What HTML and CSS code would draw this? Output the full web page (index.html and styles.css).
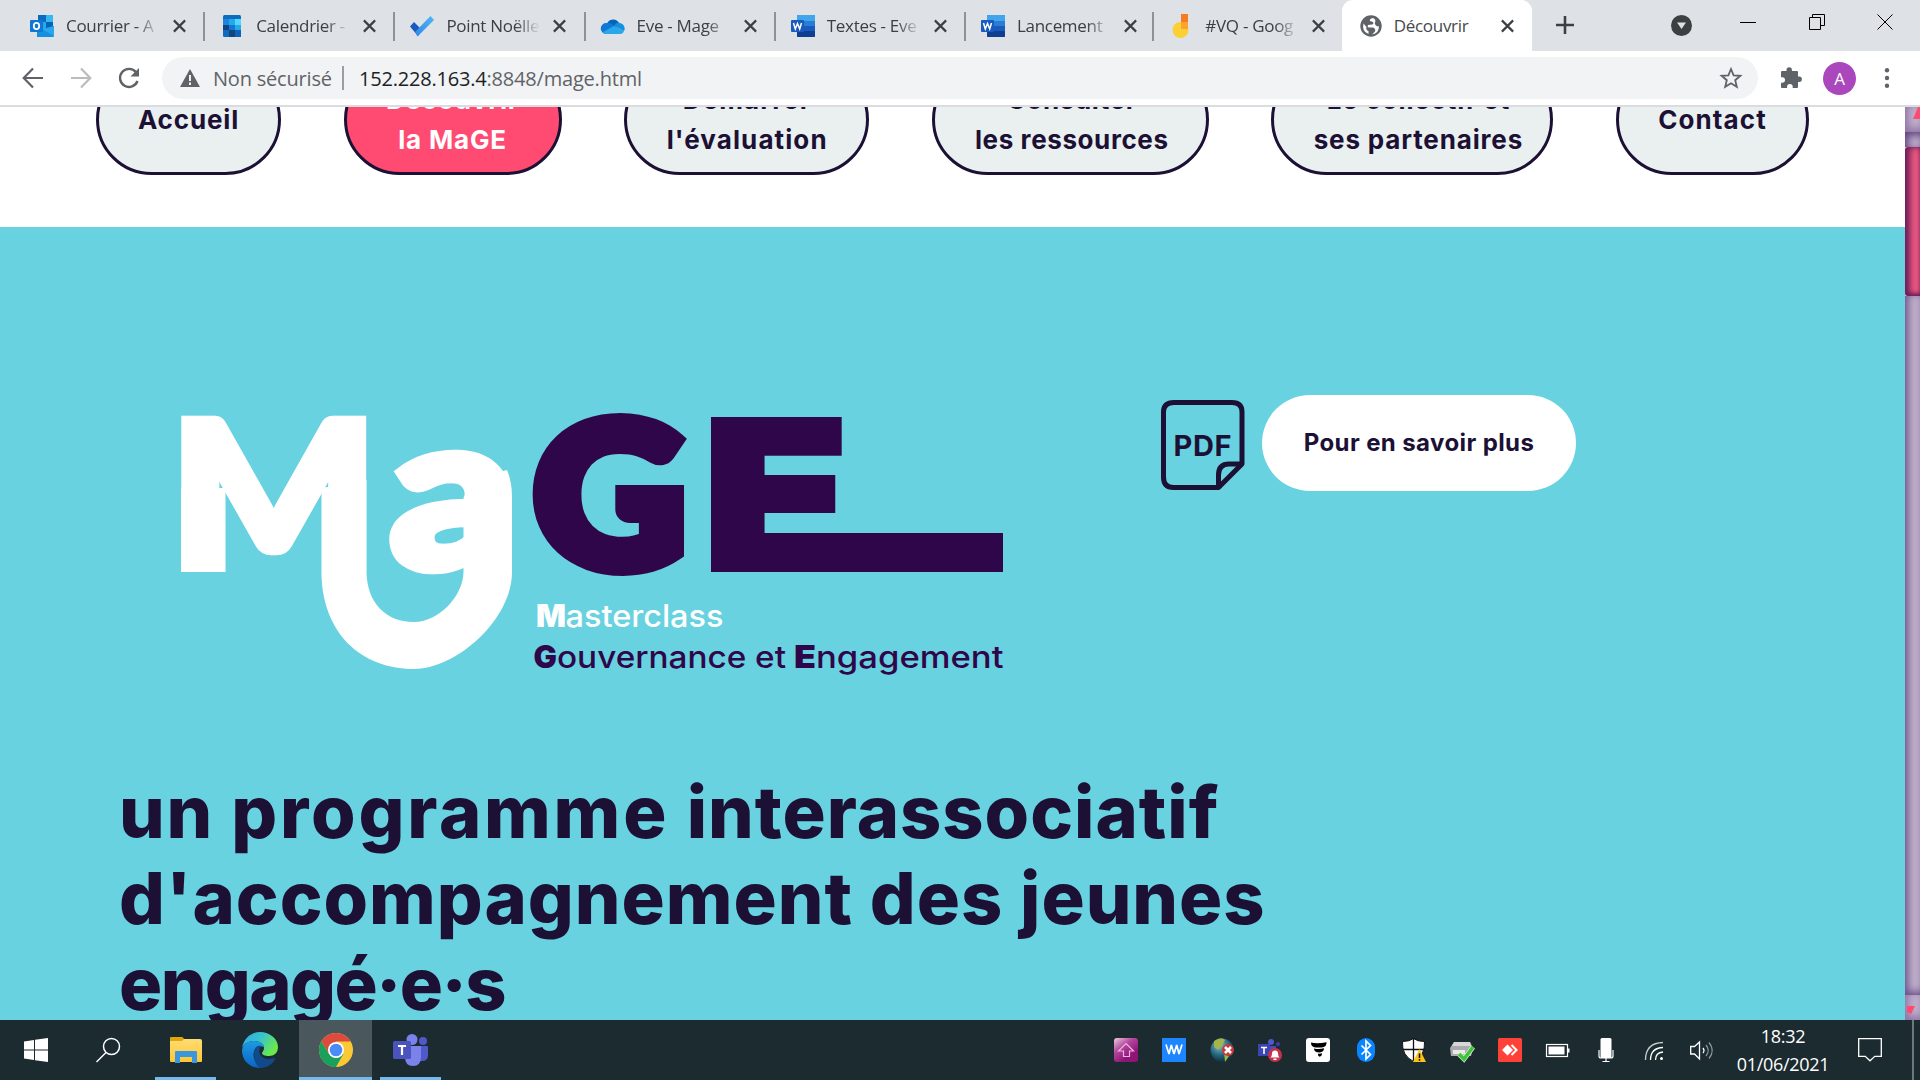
FILE: index.html
```html
<!DOCTYPE html>
<html lang="fr">
<head>
<meta charset="utf-8">
<title>Découvrir</title>
<link rel="stylesheet" href="styles.css">
</head>
<body>
<svg class="defs" aria-hidden="true">
  <defs>
    <linearGradient id="check" x1="1" y1="0" x2="0" y2="1"><stop offset="0" stop-color="#4db8f8"/><stop offset="1" stop-color="#2f86e8"/></linearGradient>
    <linearGradient id="edgeTop" x1="0" y1="0" x2="1" y2=".5"><stop offset="0" stop-color="#2fa9e6"/><stop offset=".5" stop-color="#37c2cf"/><stop offset="1" stop-color="#6be84c"/></linearGradient>
    <linearGradient id="edgeLow" x1="0" y1="0" x2="0" y2="1"><stop offset="0" stop-color="#1e9be3"/><stop offset="1" stop-color="#0a63c4"/></linearGradient>
    <linearGradient id="folder" x1="0" y1="0" x2="0" y2="1"><stop offset="0" stop-color="#ffdc73"/><stop offset="1" stop-color="#fcc735"/></linearGradient>
    <linearGradient id="plum" x1="0" y1="0" x2=".6" y2=".8"><stop offset="0" stop-color="#e9cfe3"/><stop offset=".5" stop-color="#b5479d"/><stop offset="1" stop-color="#8f1478"/></linearGradient>
    <radialGradient id="globe" cx=".4" cy=".3" r=".7"><stop offset="0" stop-color="#7fc0cf"/><stop offset=".6" stop-color="#25677f"/><stop offset="1" stop-color="#123542"/></radialGradient>
    <symbol id="x" viewBox="0 0 16 16"><path d="M2 2l12 12M14 2L2 14" fill="none" stroke="#3c4043" stroke-width="2.3"/></symbol>
    <symbol id="word" viewBox="0 0 24 22">
      <rect x="6" width="18" height="22" rx="1" fill="#185abd"/><path d="M6 1q0-1 1-1h16q1 0 1 1v5H6z" fill="#41a5ee"/><path d="M6 6h18v5H6z" fill="#2b7cd3"/><path d="M6 16h18v5q0 1-1 1H7q-1 0-1-1z" fill="#103f91"/>
      <rect y="5" width="13" height="12" rx="1" fill="#185abd"/><path d="M2.500 8l1.800 6 2.200-5.500L8.700 14l1.800-6" fill="none" stroke="#fff" stroke-width="1.500"/>
    </symbol>
  </defs>
</svg>

<div class="screen">
  <header class="tabs">
    <div class="tab">
      <svg class="fav" viewBox="0 0 24 22"><rect x="8" width="15" height="15" fill="#28a8ea"/><path d="M8 0h8v7H8z" fill="#0a6cbd"/><path d="M16 7h7v7h-7z" fill="#0364b8"/><path d="M16 0h7v7h-7z" fill="#35b8f1"/><path d="M7 11l9 5 8-5v10q0 1-1 1H7z" fill="#1490df"/><path d="M24 11v10L12 14z" fill="#28a8ea"/><rect y="5" width="13" height="12" rx="1" fill="#0f78d4"/><ellipse cx="6.5" cy="11" rx="2.7" ry="3.1" fill="none" stroke="#fff" stroke-width="1.8"/></svg>
      <span class="title">Courrier - A</span><svg class="close"><use href="#x"/></svg>
    </div>
    <div class="tab">
      <svg class="fav" viewBox="0 0 24 22"><rect x="3" width="18" height="22" rx="1.5" fill="#0f6cbd"/><path d="M3 4h6v6H3z" fill="#1a86dd"/><path d="M9 4h6v6H9z" fill="#28a8ea"/><path d="M15 4h6v6h-6z" fill="#50d9ff"/><path d="M9 10h6v5H9z" fill="#0f78d4"/><path d="M15 10h6v5h-6z" fill="#28a8ea"/><path d="M3 10h6v5H3zM9 15h6v7H9z" fill="#14447d"/><path d="M15 15h6v7h-6z" fill="#0f62ba"/></svg>
      <span class="title">Calendrier -</span><svg class="close"><use href="#x"/></svg>
    </div>
    <div class="tab">
      <svg class="fav" viewBox="0 0 24 22"><path d="M0 11.500L4 7l8 8-4 6z" fill="#195abd"/><path d="M7.500 21.500L24 5 20.500 1 5 17z" fill="url(#check)"/></svg>
      <span class="title">Point Noëlle</span><svg class="close"><use href="#x"/></svg>
    </div>
    <div class="tab">
      <svg class="fav" viewBox="0 0 24 22"><path d="M6 9a6.500 6.500 0 0 1 12-1l-4 6z" fill="#0364b8"/><path d="M5 19A5.500 5.500 0 0 1 5.500 8Q8 7 11 9l7 5z" fill="#0f78d4"/><path d="M13 11q2-4 6-3a5.500 5.500 0 0 1 4 8z" fill="#1490df"/><path d="M2 17l11-6 10 5q-1 3-4 3H5q-2 0-3-2z" fill="#28a8ea"/></svg>
      <span class="title">Eve - Mage</span><svg class="close"><use href="#x"/></svg>
    </div>
    <div class="tab">
      <svg class="fav"><use href="#word"/></svg>
      <span class="title">Textes - Eve</span><svg class="close"><use href="#x"/></svg>
    </div>
    <div class="tab">
      <svg class="fav"><use href="#word"/></svg>
      <span class="title">Lancement</span><svg class="close"><use href="#x"/></svg>
    </div>
    <div class="tab">
      <svg class="fav" viewBox="0 0 24 22"><path d="M12-1h7v8h-7z" fill="#f57c20"/><circle cx="11.500" cy="15" r="8" fill="#fbd034"/><path d="M12 7h7v7h-7z" fill="#fba22f"/></svg>
      <span class="title">#VQ - Goog</span><svg class="close"><use href="#x"/></svg>
    </div>
    <div class="tab active">
      <svg class="fav" viewBox="0 0 24 22"><circle cx="13" cy="11" r="10.700" fill="#5f6368"/><path d="M15 3q-4 1-3 3l3 1q1 2-1 2.500l-4 .5q-1 2 1 2.500h4q3 1 2 4l-3 3q7-1 7-8.500-1 1-3-.5-2-2-.500-4.500 0-2-2.500-3z" fill="#fff"/><path d="M5.500 8.500q-2 8 5 10.500v-3q-3-1-2-4z" fill="#fff"/></svg>
      <span class="title">Découvrir</span><svg class="close"><use href="#x"/></svg>
    </div>
    <svg class="newtab" viewBox="0 0 18 18"><path d="M9 0v18M0 9h18" stroke="#3c4043" stroke-width="2.600"/></svg>
    <div class="window">
      <svg width="21" height="21" viewBox="0 0 21 21"><circle cx="10.500" cy="10.500" r="10.500" fill="#3c4043"/><path d="M6 7.500h9L10.500 14z" fill="#dee1e6"/></svg>
      <svg width="16" height="16" viewBox="0 0 16 16"><path d="M0 8.500h16" stroke="#000"/></svg>
      <svg width="16" height="16" viewBox="0 0 16 16" fill="none" stroke="#000"><path d="M.5 3.500h11v12H.5zM3.500 3V.5h12v11H12"/></svg>
      <svg width="16" height="16" viewBox="0 0 16 16"><path d="M.5.5l15 15m0-15l-15 15" stroke="#000"/></svg>
    </div>
  </header>

  <div class="toolbar">
    <svg class="nav-icon" viewBox="0 0 24 24" fill="none" stroke="#5f6368" stroke-width="2.200"><path d="M22 12H3M12 2.500L2.700 12l9.300 9.500"/></svg>
    <svg class="nav-icon" viewBox="0 0 24 24" fill="none" stroke="#babcbe" stroke-width="2.200"><path d="M2 12h19M12 2.500l9.300 9.500-9.300 9.500"/></svg>
    <svg class="nav-icon" viewBox="0 0 24 24" fill="none" stroke="#5f6368" stroke-width="2.400"><path d="M20.500 15A9 9 0 1 1 19 6.200"/><path d="M22 2v8.500h-8.500z" fill="#5f6368" stroke="none"/></svg>
    <div class="omnibox">
      <svg width="20" height="18" viewBox="0 0 20 18"><path d="M10 0l10 18H0z" fill="#5f6368"/><path d="M10 6v6m0 1.500V16" stroke="#f1f3f4" stroke-width="2"/></svg>
      <span class="secure">Non sécurisé</span>
      <span class="url"><b>152.228.163.4</b>:8848/mage.html</span>
      <svg class="star" width="22" height="22" viewBox="0 0 22 22"><path d="M11 2l2.600 6.300 6.800.5-5.200 4.400 1.600 6.600L11 16.200l-5.800 3.600 1.600-6.600L1.600 8.800l6.800-.5z" fill="none" stroke="#5f6368" stroke-width="1.800"/></svg>
    </div>
    <svg class="puzzle" width="22" height="22" viewBox="0 0 22 22"><path d="M1 5q0-1 1-1h4.500V3a2.700 2.700 0 0 1 5.400 0v1H17q1 0 1 1v4.500h1.200a2.700 2.700 0 0 1 0 5.400H18V20q0 1-1 1h-4.300v-1.300a2.800 2.800 0 0 0-5.600 0V21H2q-1 0-1-1v-4.200h1.200a2.800 2.800 0 0 0 0-5.600H1z" fill="#5f6368"/></svg>
    <span class="avatar">A</span>
    <svg class="dots" width="6" height="20" viewBox="0 0 6 20" fill="#5f6368"><circle cx="3" cy="2.200" r="2.200"/><circle cx="3" cy="10" r="2.200"/><circle cx="3" cy="17.800" r="2.200"/></svg>
  </div>

  <div class="viewport">
    <main class="page">
      <nav class="menu">
        <a class="pill home">Accueil</a>
        <a class="pill discover current">Découvrir<br>la MaGE</a>
        <a class="pill start">Démarrer<br>l'évaluation</a>
        <a class="pill resources">Consulter<br>les ressources</a>
        <a class="pill partners">Le collectif et<br>ses partenaires</a>
        <a class="pill contact">Contact</a>
      </nav>
      <section class="hero">
        <div class="intro">
          <svg class="logo" viewBox="180 412 824 262">
            <g class="mark" fill="#fff" stroke="#fff">
              <text stroke-width="8" transform="translate(169 568) scale(1.1 1.02)">M</text>
              <path stroke="none" d="M181 488h44.500v84H181z"/>
              <text stroke-width="10" transform="translate(390.200 566.500) scale(1.242 1.068)">a</text>
              <path stroke="none" d="M321.500 488V575C323 632 360 669 414 669 456 669 512 620 512 572V497Q512 482 507 470L470 480 463.500 498V572C463 597 438 622 414 622 385 622 367 602 366.500 572V480z"/>
            </g>
            <g class="mark" fill="#2f064a" stroke="#2f064a">
              <text stroke-width="16" transform="translate(534.100 566.100) scale(1.045 .988)">G</text>
              <text class="wide" stroke-width="6" transform="translate(703.400 568.900) scale(1.179 1.026)">E</text>
              <path stroke="none" d="M720 533h283v39H720z"/>
            </g>
            <g class="tagline" fill="#fff"><text x="536" y="626.500" class="cap" textLength="30" lengthAdjust="spacingAndGlyphs">M</text><text x="565.500" y="626.500" textLength="158" lengthAdjust="spacingAndGlyphs">asterclass</text></g>
            <g class="tagline" fill="#2f064a"><text x="533.500" y="667.500" class="cap">G</text><text x="557" y="667.500" textLength="229" lengthAdjust="spacingAndGlyphs">ouvernance et</text><text x="794" y="667.500" class="cap" textLength="22" lengthAdjust="spacingAndGlyphs">E</text><text x="816" y="667.500" textLength="187.500" lengthAdjust="spacingAndGlyphs">ngagement</text></g>
          </svg>
          <div class="more">
            <svg class="pdf" viewBox="0 0 84 90"><g fill="none" stroke="#1c1135" stroke-width="5" stroke-linejoin="round"><path d="M81 64V12Q81 2.500 71 2.500H13Q2.500 2.500 2.500 12V77q0 10.500 10 10.500H57.500L81 64H68Q57.500 64 57.500 75V87.500"/></g><text x="12.500" y="56" textLength="58">PDF</text></svg>
            <a class="button">Pour en savoir plus</a>
          </div>
        </div>
        <h1><span class="l1">un <span class="w1">programme</span> <span class="w2">interassociatif</span></span><span class="l2">d'accompagnement des jeunes</span><span class="l3">engagé·e·s</span></h1>
      </section>
    </main>
    <aside class="scrollbar">
      <div class="arrow"><svg class="up" viewBox="0 0 8 12"><path d="M8 0v12H0L5 0z" fill="#ff4b72"/></svg></div>
      <div class="before"></div>
      <div class="thumb"></div>
      <div class="track"></div>
      <div class="arrow"><svg class="down" viewBox="0 0 8 9"><path d="M0 0h8L4 8 0 6z" fill="#ff4b72"/></svg></div>
    </aside>
  </div>

  <footer class="taskbar">
    <div class="apps">
      <div class="app"><svg width="24" height="24" viewBox="0 0 24 24"><path d="M0 3.400l10-1.500v9.500H0zM11 1.700L24 0v11.400H11zM0 12.500h10V22L0 20.600zM11 12.500h13V24l-13-1.800z" fill="#fff"/></svg></div>
      <div class="app"><svg width="24" height="24" viewBox="0 0 24 24" fill="none" stroke="#fff" stroke-width="1.500"><circle cx="15.500" cy="8.500" r="8"/><path d="M10 14.500L.5 24"/></svg></div>
      <div class="app open explorer"><svg width="32" height="28" viewBox="0 0 32 28"><path d="M0 2q0-1 1-1h11q1 0 2 2v4H0z" fill="#e5a50a"/><path d="M0 5h12l2-2h16q2 0 2 2v20q0 1-1 1H1q-1 0-1-1z" fill="url(#folder)"/><path d="M5 16q0-1 1-1h20q1 0 1 1v11h-5v-6H10v6H5z" fill="#3a96dd"/></svg></div>
      <div class="app edge"><svg width="36" height="36" viewBox="0 0 36 36"><path d="M0 16C2 6 9 0 18 0c10 0 18 7 18 15 0 6-4 9-9 9-4 0-7-1-7-3 0-1 2-2 2-5 0-4-4-7-10-7C6 9 2 12 0 16z" fill="url(#edgeTop)"/><path d="M0 18C1 12 6 9 12 9c6 0 10 3 10 6-8-2-12 4-10 11 1 5 5 8 9 10C8 37 0 29 0 18z" fill="url(#edgeLow)"/><path d="M12 21c0-5 3-8 7-7-4 5-1 13 8 13 3 0 5-1 6-1 1 1-4 10-15 10-4-2-6-8-6-15z" fill="#114a8b"/></svg></div>
      <div class="app open focused"><svg width="34" height="34" viewBox="0 0 34 34"><circle cx="17" cy="17" r="17" fill="#fbc934"/><path d="M2.300 8.500A17 17 0 0 1 31.700 8.500H17L10 21z" fill="#dc4b3e"/><path d="M2.300 8.500A17 17 0 0 0 17 34l7.400-13H10z" fill="#19a05c"/><circle cx="17" cy="17" r="8" fill="#fff"/><circle cx="17" cy="17" r="6.300" fill="#4b8bf5"/></svg></div>
      <div class="app open"><svg width="36" height="32" viewBox="0 0 36 32"><circle cx="19" cy="5.500" r="5.500" fill="#7b83eb"/><circle cx="30" cy="7" r="4" fill="#5059c9"/><path d="M25 12h9q1 0 1 1v8q0 6-6 6h-4z" fill="#5059c9"/><path d="M12 12h16v11q0 9-8 9t-8-9z" fill="#7b83eb"/><rect y="7" width="18" height="18" rx="1.500" fill="#4b53bc"/><path d="M5 12h8M9 12v9" stroke="#fff" stroke-width="2.200"/></svg></div>
    </div>
    <div class="tray">
      <div class="cell"><svg viewBox="0 0 24 24"><rect width="24" height="24" rx="3" fill="url(#plum)"/><path d="M12 5.500l7.500 7.500h-4v5.500h-6V13h-5z" fill="none" stroke="#e8b7dc" stroke-width="1.200"/></svg></div>
      <div class="cell"><svg viewBox="0 0 24 24"><path d="M0 0h24v24H0z" fill="#1d86ff"/><path d="M4 6.500l3 9.500L9.300 7l2.700 9 2.700-9L17 16l3-9.500" fill="none" stroke="#fff" stroke-width="1.700" stroke-linejoin="bevel"/></svg></div>
      <div class="cell"><svg viewBox="0 0 24 24"><circle cx="12" cy="12" r="11.500" fill="url(#globe)"/><path d="M4 3q7-5 11-1l-3 6-4 4-4-3zM14 14l5 4-4 6z" fill="#a3b44a"/><circle cx="18" cy="12" r="6" fill="#c83a3a"/><path d="M15 9l6 6m0-6l-6 6" stroke="#fff" stroke-width="2.500"/></svg></div>
      <div class="cell"><svg viewBox="0 0 24 24"><circle cx="13" cy="4" r="3" fill="#5059c9"/><circle cx="20" cy="6" r="2" fill="#3b3fa8"/><path d="M8 8h10v12h-6z" fill="#464eb8"/><rect y="6" width="12" height="12" fill="#3c45b4"/><path d="M3 9.500h6m-3 0V16" stroke="#fff" stroke-width="1.600"/><circle cx="17" cy="17" r="7" fill="#c4314b"/><path d="M12.500 19.500q1.500-1 1.500-4a3 3 0 0 1 6 0q0 3 1.500 4zM15.500 20.500h3V22h-3z" fill="#fff"/></svg></div>
      <div class="cell"><svg viewBox="0 0 24 24"><rect width="24" height="24" rx="3" fill="#fff"/><path d="M5 4.500q6 1.500 15.500-.3.500 5-5 5.300l-6 .1Q5 9 5 4.500zM8 10.500q5 1.200 10-.2 0 3.700-4.500 4.200Q8 14.500 8 10.500zM12 15.500q2 .5 4-.2 0 3-2.500 3.500-2-1-1.500-3.300z" fill="#000"/></svg></div>
      <div class="cell"><svg viewBox="0 0 24 24"><rect x="3" width="18" height="24" rx="9" fill="#0a84ff"/><path d="M7.500 7.500l9 9L12 21V3l4.500 4.500-9 9" fill="none" stroke="#fff" stroke-width="1.700"/></svg></div>
      <div class="cell"><svg viewBox="0 0 24 24"><path d="M11.500.5q4 3 11 3 1 14-11 20-12-6-11-20 7 0 11-3z" fill="#fff" stroke="#111"/><path d="M11.500 0v23M1 11.500h21.500" stroke="#111" stroke-width="1.300"/><path d="M17.500 11L24 24H11z" fill="#fdc116"/><path d="M17.500 15.500v4.500m0 1v1.700" stroke="#111" stroke-width="1.500"/></svg></div>
      <div class="cell"><svg viewBox="0 0 24 24"><path d="M4 4h16l3 6-2 8H1L0 10z" fill="#a9abad"/><path d="M4 4h16l1 4H2z" fill="#d5d7d8"/><path d="M3 12h12v4H3z" fill="#e9e9e9"/><path d="M9 16l5 5 9-12" fill="none" stroke="#d8efd2" stroke-width="5"/><path d="M9 16l5 5 9-12" fill="none" stroke="#3fc43a" stroke-width="3.500"/></svg></div>
      <div class="cell"><svg viewBox="0 0 24 24"><rect width="24" height="24" rx="1.500" fill="#ff4238"/><path d="M9.500 6.500L15 12l-5.500 5.500L4 12z" fill="#fff"/><path d="M13.500 7l5 5-5 5" fill="none" stroke="#fff" stroke-width="2"/></svg></div>
      <div class="cell"><svg viewBox="0 0 24 24"><rect x=".5" y="6.500" width="21" height="12" fill="none" stroke="#fff" stroke-width="1.200"/><path d="M2.500 8.500h16v8h-16zM22 10.500h1.500v4H22z" fill="#fff"/></svg></div>
      <div class="cell"><svg viewBox="0 0 24 24"><rect x="6.500" width="11" height="20" rx="1.500" fill="#fff"/><path d="M5 12v6q0 2 2 2h10q2 0 2-2v-6M12 20v3.500M8.500 23.500h7" fill="none" stroke="#fff" stroke-width="1.200"/></svg></div>
      <div class="cell"><svg viewBox="0 0 24 24" fill="none" stroke="#fff" stroke-width="1.300"><path d="M3.500 22Q3.500 5 21 4.500" opacity=".75"/><path d="M8.500 22Q8.500 10 21 9.500M13.500 22q0-7.500 7.500-8"/><circle cx="19.500" cy="20.500" r="1.500" fill="#fff" stroke="none"/></svg></div>
      <div class="cell"><svg viewBox="0 0 24 24" fill="none" stroke="#fff" stroke-width="1.300"><path d="M.7 8.500h3.800L9.500 4v17l-5-5H.7z"/><path d="M13 10q2 2.500 0 5"/><path d="M16 7q4.500 5.500 0 11M19 4.500q6.500 8 0 16" opacity=".5"/></svg></div>
    </div>
    <div class="clock"><span>18:32</span><span>01/06/2021</span></div>
    <div class="notice"><svg width="24" height="24" viewBox="0 0 24 24"><path d="M.7.7h22.600v17.600h-6.500L12 22.800l-4.800-4.500H.7z" fill="none" stroke="#fff" stroke-width="1.300"/></svg></div>
    <div class="peek"></div>
  </footer>
</div>
</body>
</html>
```
FILE: styles.css
```css
* { box-sizing: border-box; }
body { margin: 0; font-family: "Open Sans", sans-serif; }
.defs { display: block; width: 0; height: 0; }
svg { display: block; flex: none; overflow: visible; }
.screen { display: flex; flex-direction: column; width: 1920px; height: 1080px; overflow: hidden; background: #fff; }

/* tab strip */
.tabs { display: flex; flex: none; height: 51px; padding-left: 14px; background: #dee1e6; }
.tab { position: relative; display: flex; align-items: center; flex: none; width: 190.2px; padding-left: 16px; }
.tab:nth-child(n+6) { width: 188.4px; }
.tab::after { content: ""; position: absolute; right: -1px; top: 12px; width: 2px; height: 29px; background: #909396; }
.tab:nth-child(7)::after, .tab.active::after { display: none; }
.fav { width: 24px; height: 22px; }
.title { width: 94px; margin-left: 12px; overflow: hidden; white-space: nowrap; font-size: 17px; letter-spacing: -0.3px; line-height: 30px; color: #3c4043; -webkit-mask-image: linear-gradient(90deg, #000 74%, transparent 100%); mask-image: linear-gradient(90deg, #000 74%, transparent 100%); }
.close { width: 15px; height: 16px; margin-left: 12px; }
.tab.active { width: 190px; background: #fff; border-radius: 11px 11px 0 0; }
.tab.active .title { -webkit-mask-image: none; mask-image: none; color: #45494d; }
.newtab { width: 18px; height: 18px; margin: 16px 0 0 24px; }
.window { display: flex; align-items: center; margin-left: auto; padding: 0 27px 8px 0; gap: 52.5px; }
.window svg:first-child { margin: 7px -4px 0 0; }

/* address row */
.toolbar { display: flex; align-items: center; flex: none; height: 56px; padding-left: 21px; border-bottom: 2px solid #dadce0; }
.nav-icon { width: 24px; height: 24px; margin-right: 24px; }
.omnibox { display: flex; align-items: center; width: 1596px; height: 42px; margin-left: -3px; padding: 0 16px 0 18px; border-radius: 21px; background: #f1f3f4; font-size: 20px; color: #5f6368; white-space: nowrap; }
.secure { width: 131px; height: 24px; margin: 0 15px 0 13px; border-right: 2px solid #9a9da1; line-height: 25px; letter-spacing: -0.2px; }
.url { line-height: 25px; letter-spacing: -0.2px; }
.url b { font-weight: 400; color: #202124; }
.star { margin-left: auto; }
.puzzle { margin-left: 22px; }
.avatar { width: 33px; height: 33px; margin-left: 21px; border-radius: 50%; background: #ab47bc; color: #fff; font-size: 17px; line-height: 34px; text-align: center; }
.dots { margin-left: 28px; }

/* web page */
.viewport { display: flex; flex: 1; min-height: 0; overflow: hidden; color: #1c1135; font-family: Inter, sans-serif; }
.page { width: 1905px; margin-top: -43px; }
.menu { display: flex; justify-content: space-between; padding: 0 96px; height: 163px; }
.pill { display: flex; flex-direction: column; align-items: center; justify-content: center; height: 111px; border: 3px solid #1c1135; border-radius: 56px; background: #eaf0f0; font-size: 26px; font-weight: 700; line-height: 40px; letter-spacing: 0.85px; text-align: center; white-space: nowrap; }
.home { width: 185px; }
.discover { width: 218px; }
.start { width: 245px; padding-left: 1px; letter-spacing: 1.1px; }
.resources { width: 277px; padding-left: 3px; letter-spacing: 0.6px; }
.partners { width: 282px; padding-left: 12px; }
.contact { width: 193px; letter-spacing: 1.1px; }
.pill.current { background: #ff4b72; color: #fff; }
.hero { height: 900px; padding: 168px 0 0 119px; background: #69d2e0; }
.intro { display: flex; align-items: flex-start; padding-left: 61px; }
.logo { width: 824px; height: 262px; margin-top: 17px; }
.mark { font: 900 200px Lato, sans-serif; }
.wide { font-family: Inter, sans-serif; }
.tagline { font: 500 31px Inter, sans-serif; }
.cap { font-weight: 900; }
.more { display: flex; margin-left: 157px; gap: 17px; }
.pdf { width: 84px; height: 90px; margin-top: 5px; }
.pdf text { font: 700 29px Inter, sans-serif; fill: #1c1135; }
.button { width: 314px; height: 96px; border-radius: 48px; background: #fff; font-size: 24px; font-weight: 700; letter-spacing: 0.4px; line-height: 96px; text-align: center; }
h1 { margin: 95px 0 0; font-size: 72px; font-weight: 800; line-height: 86px; letter-spacing: 1px; white-space: nowrap; }
.l1, .l2, .l3 { display: block; }
.l1 { letter-spacing: 1.7px; }
.w1 { letter-spacing: 2.8px; }
.w2 { letter-spacing: 1px; }
.l3 { letter-spacing: -1.6px; }

/* themed scrollbar */
.scrollbar { display: flex; flex-direction: column; width: 15px; background: #bfb2cb; }
.arrow { height: 25px; overflow: hidden; box-shadow: inset 3px -3px 8px #8d6fa3; }
.before { height: 15px; box-shadow: inset 3px 3px 8px #5d3c7c; }
.thumb { height: 149px; border-radius: 4px 0 0 4px; background: #ee5a80; box-shadow: inset 5px 0 7px #6b1d5a, inset 0 -2px 4px #6b1d5a; }
.track { flex: 1; box-shadow: inset 3px -3px 9px #6a4a87; }
.up { width: 8px; height: 12px; margin-left: 8px; }
.down { width: 8px; height: 9px; margin: 11px 0 0 2px; }

/* desktop taskbar */
.taskbar { display: flex; flex: none; height: 60px; background: #1b2b30; color: #fff; }
.apps { display: flex; width: 1102px; }
.app { display: flex; align-items: center; justify-content: center; width: 72px; }
.app.open { width: 61px; border-bottom: 3px solid #76b9ed; padding-top: 3px; }
.explorer { margin-left: 11px; }
.edge { width: 83px; padding-left: 5px; }
.app.focused { width: 73px; margin-right: 8px; background: #4a575c; }
.tray { display: flex; }
.cell { display: flex; align-items: center; justify-content: center; width: 48px; }
.cell svg { width: 24px; height: 24px; }
.clock { display: flex; flex-direction: column; width: 114px; padding-top: 2px; font-size: 18px; line-height: 28px; letter-spacing: -0.3px; text-align: center; }
.notice { display: flex; align-items: center; justify-content: center; width: 60px; }
.peek { margin-left: 12px; border-left: 2px solid #6c787c; }
```
